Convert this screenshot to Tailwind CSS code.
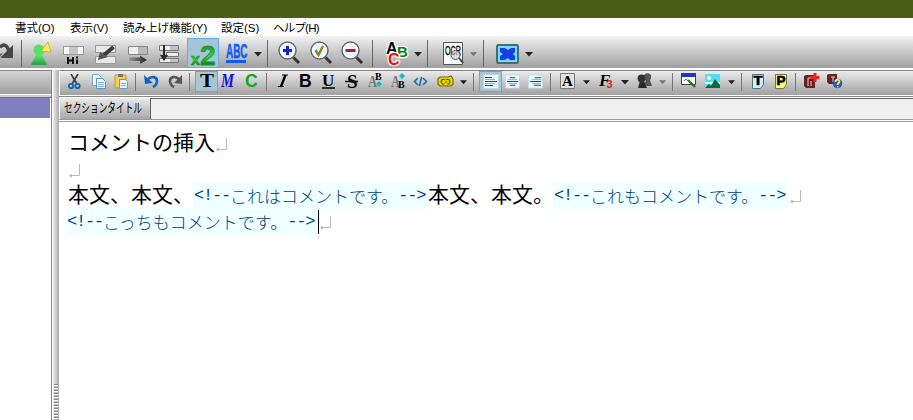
<!DOCTYPE html>
<html lang="ja">
<head>
<meta charset="utf-8">
<title>エディタ</title>
<script src="https://cdn.jsdelivr.net/npm/@tailwindcss/browser@4"></script>
</head>
<body class="w-[913px] h-[420px] overflow-hidden bg-white text-black font-['Liberation_Sans','Noto_Sans_CJK_JP',sans-serif]">
<svg class="absolute w-0 h-0">
  <defs>
    <linearGradient id="gr" x1="0" y1="0" x2="0" y2="1"><stop offset="0" stop-color="#5df06a"/><stop offset="1" stop-color="#2c9a4a"/></linearGradient>
    <linearGradient id="x2g" x1="0" y1="0" x2="0" y2="1"><stop offset="0.15" stop-color="#18882a"/><stop offset=".5" stop-color="#30d838"/><stop offset=".85" stop-color="#0c7018"/></linearGradient>
    <linearGradient id="dk" x1="0" y1="0" x2="1" y2="0"><stop offset="0" stop-color="#999"/><stop offset="1" stop-color="#222"/></linearGradient>
    <linearGradient id="kd" x1="0" y1="0" x2="1" y2="0"><stop offset="0" stop-color="#555"/><stop offset="1" stop-color="#222"/></linearGradient>
    <symbol id="dd" viewBox="0 0 8 5"><path d="M0 0h8L4 4.5z" fill="currentColor"/></symbol>
    <symbol id="lens" viewBox="0 0 23 24"><path d="M15.500 16.500l5.500 5.500" stroke="#333" stroke-width="3"/><circle cx="9.500" cy="9.500" r="8.500" fill="#e4f8ff" stroke="#667" stroke-width="1.500"/><circle cx="9.500" cy="9.500" r="6.800" fill="none" stroke="#fff" stroke-width="1.500"/></symbol>
  </defs>
</svg>
<div class="flex flex-col h-full">
  <div class="h-[18px] shrink-0 bg-[#4a5e17]"></div>
  <nav class="h-[18px] shrink-0 bg-white flex items-center pl-[15px] pt-px text-[11.500px] leading-[18px] whitespace-nowrap">
    <span class="w-[55px]">書式(O)</span>
    <span class="w-[53px]">表示(V)</span>
    <span class="w-[98px]">読み上げ機能(Y)</span>
    <span class="w-[52px]">設定(S)</span>
    <span class="tracking-[-0.800px]">ヘルプ(H)</span>
  </nav>

  <div class="h-[34px] shrink-0 bg-linear-to-b from-[#f2f2f2] to-[#a0a0a0] border-b-2 border-b-white flex items-start pt-[2px] overflow-hidden">
    <svg class="shrink-0 w-[14px] h-[30px]" viewBox="0 0 14 30"><path d="M0 9.500C4 4.500 8 8 9 14" stroke="#444" stroke-width="3.500" fill="none"/><path d="M1 19L13 7v13H1z" fill="#484848"/><path d="M0 19v-3l3-1z" fill="#666"/></svg>
    <i class="shrink-0 ml-[7px] mt-[2px] w-px h-[27px] bg-[#666]"></i>
    <svg class="shrink-0 ml-[9px] w-[22px] h-[30px]" viewBox="0 0 22 30"><path d="M0 27c1-4 4-6 5-11h6c1 5 4 7 5 11z" fill="url(#gr)"/><circle cx="8" cy="12" r="5.500" fill="#57e262"/><path d="M10 13l7-9 3 10z" fill="#ffe94d" stroke="#c8a820" stroke-width=".7"/></svg>
    <svg class="shrink-0 ml-[10px] w-[21px] h-[30px]" viewBox="0 0 21 30"><rect x=".5" y="8.500" width="20" height="8" fill="#f6f6f6" stroke="#999"/><path d="M6 9h9v7H6z" fill="#c8c8c8"/><path d="M5 19v7M10 19v7M5 22.500h5M14 21.500V26M14 18.500v2" stroke="#111" stroke-width="2"/></svg>
    <svg class="shrink-0 ml-[11px] w-[21px] h-[30px]" viewBox="0 0 21 30"><path d="M.5 7.500h20v7h-20zM.5 18.500h20v7h-20z" fill="#e8e8e8" stroke="#999"/><path d="M18.500 9L9 17" stroke="#3c3c3c" stroke-width="4"/><path d="M3 22l2-8 8 5z" fill="#555"/></svg>
    <svg class="shrink-0 ml-[12px] w-[21px] h-[30px]" viewBox="0 0 21 30"><path d="M.5 8.500h19v8H.5z" fill="#eee" stroke="#888"/><path d="M10 9h9v7h-9z" fill="#bbb"/><path d="M1 19.500h11v-2l7 4.500-7 4v-3H1z" fill="url(#dk)"/></svg>
    <svg class="shrink-0 ml-[10px] w-[21px] h-[30px]" viewBox="0 0 21 30"><path d="M.5 7.500h19v5H.5zM7.500 14.500h12v4h-12zM.5 20.500h19v4H.5z" fill="#eee" stroke="#777"/><path d="M11 8h8v4h-8zM11 21h8v3h-8z" fill="#c4c4c4"/><path d="M4 7h2v10h3l-4 6-4-6h3z" fill="#2a2a2a"/></svg>
    <div class="shrink-0 ml-[7px] w-[32px] h-[30px] bg-[#a5c4d8] border border-[#62aee0]">
      <svg class="w-[30px] h-[28px]" viewBox="0 0 30 28"><text x="3" y="26" font-size="16" font-weight="bold" font-family="Liberation Sans" fill="url(#x2g)" stroke="#1d9a2b" stroke-width=".7">x</text><text x="12" y="26" font-size="28" font-weight="bold" font-family="Liberation Sans" fill="url(#x2g)" stroke="#1d9a2b" stroke-width=".8">2</text></svg>
    </div>
    <svg class="shrink-0 ml-[6px] w-[24px] h-[30px]" viewBox="0 0 24 30"><text x="1" y="20" font-size="20" font-weight="bold" font-family="Liberation Sans" fill="#0a5cff" stroke="#0a5cff" stroke-width=".4" textLength="21.500" lengthAdjust="spacingAndGlyphs">ABC</text><path d="M1 22h20v3H1z" fill="#0a5cff"/></svg>
    <svg class="shrink-0 ml-[5px] mt-[14px] w-[8px] h-[5px] text-[#222]"><use href="#dd"/></svg>
    <i class="shrink-0 ml-[5px] mt-[2px] w-px h-[27px] bg-[#666]"></i>
    <svg class="shrink-0 ml-[10px] mt-[3px] w-[23px] h-[24px]" viewBox="0 0 23 24"><use href="#lens"/><path d="M9.500 5v9M5 9.500h9" stroke="#1020d8" stroke-width="3"/></svg>
    <svg class="shrink-0 ml-[9px] mt-[3px] w-[23px] h-[24px]" viewBox="0 0 23 24"><use href="#lens"/><path d="M5.500 9l3 5L13 5" stroke="#948320" stroke-width="2.500" fill="none"/></svg>
    <svg class="shrink-0 ml-[8px] mt-[3px] w-[23px] h-[24px]" viewBox="0 0 23 24"><use href="#lens"/><path d="M4.500 9.500h10" stroke="#cc1020" stroke-width="3"/></svg>
    <i class="shrink-0 ml-[8px] mt-[2px] w-px h-[27px] bg-[#666]"></i>
    <svg class="shrink-0 ml-[13px] w-[24px] h-[30px]" viewBox="0 0 24 30" font-family="Liberation Sans" font-weight="bold" stroke-linejoin="round"><g stroke="#fff" stroke-width="2.500" paint-order="stroke"><text x="0" y="16" font-size="16" fill="#000">A</text><text x="11" y="19" font-size="15" fill="#0a7d17">B</text><text x="2" y="27" font-size="16" fill="#f01010">C</text></g></svg>
    <svg class="shrink-0 ml-[4px] mt-[14px] w-[8px] h-[5px] text-[#222]"><use href="#dd"/></svg>
    <i class="shrink-0 ml-[5px] mt-[2px] w-px h-[27px] bg-[#666]"></i>
    <svg class="shrink-0 ml-[15px] w-[22px] h-[30px]" viewBox="0 0 22 30"><path d="M.5 4.500h19v22H.5z" fill="#fafafa" stroke="#555"/><text x="2" y="17" font-size="12" font-family="Liberation Sans" fill="#000" stroke="#000" stroke-width=".3" textLength="16" lengthAdjust="spacingAndGlyphs">OCR</text><circle cx="12.500" cy="17" r="4.500" fill="#ccc" fill-opacity=".65" stroke="#555"/><path d="M16 20l4 5" stroke="#444" stroke-width="2"/></svg>
    <svg class="shrink-0 ml-[5px] mt-[14px] w-[7px] h-[5px] text-[#777]"><use href="#dd"/></svg>
    <i class="shrink-0 ml-[6px] mt-[2px] w-px h-[27px] bg-[#666]"></i>
    <svg class="shrink-0 ml-[12px] w-[24px] h-[30px]" viewBox="0 0 24 30"><rect x="1" y="7" width="21" height="18" rx="1.500" fill="#68e4f5" stroke="#526570" stroke-width="2"/><path d="M4 10h5l3 2 3-2h4v4l-2 2 2 2v4h-5l-2-2-3 2H4v-4l3-2-3-2z" fill="#183ce8"/></svg>
    <svg class="shrink-0 ml-[5px] mt-[14px] w-[8px] h-[5px] text-[#222]"><use href="#dd"/></svg>
  </div>

  <div class="flex flex-1 min-h-0">
    <aside class="w-[52px] shrink-0 flex flex-col border-r border-r-[#888]">
      <div class="h-[24px] bg-linear-to-b from-[#d4d4d4] to-[#a0a0a0] border-t border-t-[#888]"></div>
      <div class="h-[4px] border-b border-b-[#777] border-t border-t-white bg-[#ccc]"></div>
      <div class="h-[20px] w-[50px] bg-[#8080c0]"></div>
      <div class="flex-1 bg-white"></div>
    </aside>
    <div class="w-[7px] shrink-0 border-l border-l-white bg-linear-to-r from-[#eee] to-[#aaa] flex flex-col justify-end">
      <div class="h-[36px] ml-px w-[4px] bg-[repeating-linear-gradient(to_bottom,#888_0_1px,#fff_1px_2px,#bbb_2px_3px)]"></div>
    </div>
    <main class="flex-1 min-w-0 flex flex-col">
      <div class="h-[25px] shrink-0 bg-linear-to-b from-[#ececec] to-[#a0a0a0] border-t border-t-[#888] border-l border-l-white flex items-start">
        <svg class="shrink-0 ml-[8px] mt-[3px] w-[14px] h-[16px]" viewBox="0 0 14 16"><path d="M3 0l6 10M10 0L4 10" stroke="#345" stroke-width="1.700"/><circle cx="3" cy="12" r="2.200" fill="none" stroke="#1264b4" stroke-width="1.800"/><circle cx="9.500" cy="12" r="2.200" fill="none" stroke="#1264b4" stroke-width="1.800"/></svg>
        <svg class="shrink-0 ml-[9px] mt-[2px] w-[16px] h-[17px]" viewBox="0 0 16 17"><path d="M1.500 1.500h6l3 3v8h-9z" fill="#eef6ff" stroke="#78a4d4"/><path d="M5.500 5.500h6l3 3v7h-9z" fill="#eef6ff" stroke="#5890c8"/><path d="M7 9.500h6M7 11.500h6M7 13.500h6" stroke="#88b0dc"/></svg>
        <svg class="shrink-0 ml-[7px] mt-[2px] w-[15px] h-[17px]" viewBox="0 0 15 17"><path d="M1 2h11v13H1z" fill="#f4ce50" stroke="#c09830"/><path d="M4 1h5v3H4z" fill="#777"/><path d="M5.500 6.500h6l2 2v7h-8z" fill="#eff6ff" stroke="#6898c8"/><path d="M7 10.500h5M7 12.500h5" stroke="#88b0dc"/></svg>
        <i class="shrink-0 ml-[6px] mt-[2px] w-px h-[18px] bg-[#777]"></i>
        <svg class="shrink-0 ml-[8px] mt-[3px] w-[15px] h-[15px]" viewBox="0 0 15 15"><path d="M3 6c5-5 10-3 10 1 0 3-2 5-4 6" fill="none" stroke="#1564bc" stroke-width="2.600"/><path d="M0 1l1 9 8-1z" fill="#1564bc"/></svg>
        <svg class="shrink-0 ml-[9px] mt-[3px] w-[15px] h-[15px]" viewBox="0 0 15 15"><path d="M12 6C7 1 2 3 2 7c0 3 2 5 4 6" fill="none" stroke="#555" stroke-width="2.600"/><path d="M14 1v9L6 9z" fill="#555"/></svg>
        <i class="shrink-0 ml-[6px] mt-[2px] w-px h-[18px] bg-[#777]"></i>
        <div class="shrink-0 ml-[5px] w-[23px] h-[21px] bg-[#a9c6d8] border border-[#62a8d8]"><svg class="w-[21px] h-[19px]"><text x="4" y="15" font-size="19" font-weight="bold" font-family="Liberation Serif" textLength="14" lengthAdjust="spacingAndGlyphs">T</text></svg></div>
        <svg class="shrink-0 ml-[3px] w-[15px] h-[20px]"><text x="0" y="16" font-size="18" font-weight="bold" font-style="italic" font-family="Liberation Serif" fill="#1010e0" textLength="13" lengthAdjust="spacingAndGlyphs">M</text></svg>
        <svg class="shrink-0 ml-[9px] w-[14px] h-[20px]"><text x="0" y="16" font-size="17.500" font-weight="bold" font-family="Liberation Sans" fill="#0cac14">C</text></svg>
        <i class="shrink-0 ml-[7px] mt-[2px] w-px h-[18px] bg-[#777]"></i>
        <svg class="shrink-0 ml-[10px] w-[13px] h-[20px]"><path d="M5 4h6M1 15.500h6M8.500 4L4 15.500" stroke="#000" stroke-width="1"/><path d="M8.500 4L4 15.500" stroke="#000" stroke-width="2.400"/></svg>
        <svg class="shrink-0 ml-[9px] w-[14px] h-[20px]"><text x="0" y="16" font-size="17.500" font-weight="bold" font-family="Liberation Sans">B</text></svg>
        <svg class="shrink-0 ml-[8px] w-[16px] h-[20px]"><text x="1" y="15" font-size="17" font-weight="bold" font-family="Liberation Serif">U</text><path d="M1 17h13" stroke="#000" stroke-width="1.500"/></svg>
        <svg class="shrink-0 ml-[8px] w-[15px] h-[20px]"><text x="2" y="17" font-size="19" font-weight="bold" font-family="Liberation Serif">S</text><path d="M0 10.500h13" stroke="#000" stroke-width="1.500"/></svg>
        <svg class="shrink-0 ml-[8px] w-[16px] h-[20px]" font-family="Liberation Serif" font-weight="bold"><text x="0" y="16" font-size="17" fill="#777" textLength="9" lengthAdjust="spacingAndGlyphs">A</text><text x="7" y="9" font-size="10">B</text><path d="M8 13l3-3 3 3-3 3z" fill="#13bbc2"/></svg>
        <svg class="shrink-0 ml-[7px] w-[16px] h-[20px]" font-family="Liberation Serif" font-weight="bold"><text x="0" y="16" font-size="17" fill="#777" textLength="9" lengthAdjust="spacingAndGlyphs">A</text><text x="7" y="17" font-size="10">B</text><path d="M8 5l3-3 3 3-3 3z" fill="#13bbc2"/></svg>
        <svg class="shrink-0 ml-[6px] mt-[5px] w-[15px] h-[12px]" viewBox="0 0 15 12"><path d="M5 2L1.500 5.500 5 9M10 2l3.500 3.500L10 9M8.500 1l-2 9" fill="none" stroke="#1c6eb4" stroke-width="1.600"/></svg>
        <svg class="shrink-0 ml-[9px] mt-[3px] w-[17px] h-[15px]" viewBox="0 0 17 15"><path d="M3 3h8l3-1 2 3v5l-2 2H3L1 10V5z" fill="#ead900" stroke="#756c00" stroke-width="1.200"/><path d="M8 5.500H5L4 8l1.500 2h2M9 5.500h3L13 8l-1 2h-2M8 8h2" stroke="#554e00" fill="none" stroke-width="1.200"/></svg>
        <svg class="shrink-0 ml-[6px] mt-[9px] w-[7px] h-[5px] text-[#222]"><use href="#dd"/></svg>
        <i class="shrink-0 ml-[6px] mt-[2px] w-px h-[18px] bg-[#777]"></i>
        <div class="shrink-0 ml-[5px] w-[23px] h-[21px] bg-[#a9c6d8] border border-[#62a8d8] flex justify-center pt-[2px]"><svg class="w-[16px] h-[15px]" viewBox="0 0 16 15"><path fill="#ecfaff" stroke="#b6dcea" d="M.5.5h15v14H.5z"/><path d="M2 3.500h7M2 7.500h12M2 11.500h8" stroke="#174c84" stroke-width="1.200"/><path d="M2 5.500h10M2 9.500h10" stroke="#74bad8"/></svg></div>
        <svg class="shrink-0 ml-[3px] mt-[3px] w-[15px] h-[15px]" viewBox="0 0 16 15"><path fill="#ecfaff" stroke="#b6dcea" d="M.5.5h15v14H.5z"/><path d="M5 3.500h6M2 7.500h12M5 11.500h6" stroke="#174c84" stroke-width="1.200"/><path d="M3 5.500h10M3 9.500h10" stroke="#74bad8"/></svg>
        <svg class="shrink-0 ml-[8px] mt-[3px] w-[15px] h-[15px]" viewBox="0 0 16 15"><path fill="#ecfaff" stroke="#b6dcea" d="M.5.5h15v14H.5z"/><path d="M7 3.500h7M2 7.500h12M6 11.500h8" stroke="#174c84" stroke-width="1.200"/><path d="M4 5.500h10M4 9.500h10" stroke="#74bad8"/></svg>
        <i class="shrink-0 ml-[7px] mt-[2px] w-px h-[18px] bg-[#777]"></i>
        <svg class="shrink-0 ml-[9px] mt-[2px] w-[15px] h-[16px]"><path d="M.5.5h14v15H.5z" fill="#e2e2e2" stroke="#777"/><text x="2" y="13" font-size="15" font-weight="bold" font-family="Liberation Serif">A</text></svg>
        <svg class="shrink-0 ml-[8px] mt-[9px] w-[7px] h-[5px] text-[#222]"><use href="#dd"/></svg>
        <svg class="shrink-0 ml-[9px] w-[16px] h-[20px]"><text x="0" y="15" font-size="17" font-weight="bold" font-style="italic" font-family="Liberation Serif">F</text><text x="7.500" y="17" font-size="11" font-weight="bold" font-family="Liberation Sans" fill="#e01818">3</text></svg>
        <svg class="shrink-0 ml-[6px] mt-[9px] w-[8px] h-[5px] text-[#222]"><use href="#dd"/></svg>
        <svg class="shrink-0 ml-[8px] mt-[2px] w-[16px] h-[16px]" viewBox="0 0 16 16"><path d="M7 13l2-6h4l2 6z" fill="#555"/><circle cx="10.500" cy="4" r="3.700" fill="#555"/><path d="M1 15l2-7h4l3 7z" fill="#292929"/><circle cx="4.500" cy="5.500" r="3.900" fill="#333"/></svg>
        <svg class="shrink-0 ml-[6px] mt-[9px] w-[7px] h-[5px] text-[#777]"><use href="#dd"/></svg>
        <i class="shrink-0 ml-[6px] mt-[2px] w-px h-[18px] bg-[#777]"></i>
        <svg class="shrink-0 ml-[8px] mt-[2px] w-[16px] h-[16px]" viewBox="0 0 16 16"><path d="M.5 1.500h14v10H.5z" fill="#fff" stroke="#444"/><path d="M0 0h15v4H0z" fill="#2434c8"/><path d="M3 8l2-2 2 2" stroke="#777" fill="none"/><path d="M7 7l7 7" stroke="#2b7a2b" stroke-width="2.400"/></svg>
        <svg class="shrink-0 ml-[8px] mt-[3px] w-[16px] h-[15px]" viewBox="0 0 16 15"><path d="M0 0h15v14H0z" fill="#56dcf5"/><path d="M0 8h15v2H0z" fill="#c6f4ff"/><path d="M0 14l4-4 2 2 4-7 5 6v3z" fill="#0c6a38"/><circle cx="4" cy="4" r="2" fill="#f4fff4"/></svg>
        <svg class="shrink-0 ml-[7px] mt-[9px] w-[7px] h-[5px] text-[#222]"><use href="#dd"/></svg>
        <i class="shrink-0 ml-[6px] mt-[2px] w-px h-[18px] bg-[#777]"></i>
        <svg class="shrink-0 ml-[10px] mt-[3px] w-[13px] h-[15px]"><path d="M.5.500h11v10l-3 4h-8z" fill="#c4f5f9" stroke="#587078"/><text x="1.500" y="11" font-size="12.500" font-weight="bold" font-family="Liberation Sans" stroke="#000" stroke-width=".6" textLength="9" lengthAdjust="spacingAndGlyphs">T</text></svg>
        <svg class="shrink-0 ml-[10px] mt-[3px] w-[13px] h-[15px]"><path d="M.5.500h11v10l-3 4h-8z" fill="#fbf878" stroke="#77743c"/><text x="1.500" y="11" font-size="12.500" font-weight="bold" font-family="Liberation Sans" stroke="#000" stroke-width=".6" textLength="9" lengthAdjust="spacingAndGlyphs">P</text></svg>
        <i class="shrink-0 ml-[7px] mt-[2px] w-px h-[18px] bg-[#777]"></i>
        <svg class="shrink-0 ml-[8px] mt-[2px] w-[16px] h-[16px]" viewBox="0 0 16 16"><path d="M0 3l2-1h9v13H2L0 13z" fill="#6c1f24"/><path d="M4 5v8M4 5h4M7 8v5" stroke="#ddb" stroke-width="1"/><path d="M11 0v9M6.500 4.500h9" stroke="#ee2024" stroke-width="3"/></svg>
        <svg class="shrink-0 ml-[7px] mt-[2px] w-[16px] h-[16px]" viewBox="0 0 16 16"><path d="M0 2l2-1h8v10H2L0 9z" fill="#6c1f24"/><path d="M4 4h4M6 4v5" stroke="#ddb"/><circle cx="10.500" cy="10.500" r="4.800" fill="#2d56c4"/><path d="M8.500 9c0-3 4-3 4-.5 0 1.500-2 1.500-2 3.500" stroke="#fff04a" stroke-width="1.800" fill="none"/><path d="M10 13h1.500v1.500H10z" fill="#fff04a"/></svg>
      </div>
      <div class="h-[3px] shrink-0 bg-[#888] border-y border-y-white"></div>
      <div class="h-[21px] shrink-0 flex ">
        <div class="w-[91px] shrink-0 border-l border-l-white bg-linear-to-b from-[#ececec] to-[#a8a8a8] pl-[4px] whitespace-nowrap"><svg class="w-[80px] h-[20px]"><text x="0" y="13.500" font-size="13" font-family="Noto Sans CJK JP" textLength="78" lengthAdjust="spacingAndGlyphs">セクションタイトル</text></svg></div>
        <div class="flex-1 bg-[#efefef] border-l border-t border-[#666]"></div>
      </div>
      <div class="h-[3px] shrink-0 bg-white border-y border-y-[#999]"></div>
      <article class="flex-1 pl-[9px] pt-[8px] text-[21px] leading-[22px] whitespace-nowrap font-['Noto_Sans_CJK_JP',sans-serif]">
        <p class="h-[26px] flex">コメントの挿入<svg class="mt-[8px] ml-px w-[12px] h-[14px]" viewBox="0 0 12 14"><path d="M10.500 0v11.500H1" fill="none" stroke="#bbb"/><circle cx="2" cy="11.500" r="1.500" fill="#bbb"/></svg></p>
        <p class="h-[26px] flex"><svg class="mt-[8px] ml-px w-[12px] h-[14px]" viewBox="0 0 12 14"><path d="M10.500 0v11.500H1" fill="none" stroke="#bbb"/><circle cx="2" cy="11.500" r="1.500" fill="#bbb"/></svg></p>
        <p class="h-[26px] flex"><span>本文、本文、</span><span class="h-[27px] w-[234px] -ml-px pl-px bg-[#f0ffff] text-[#003c80] text-[17px] leading-[27px] font-light flex"><span class="font-['Liberation_Mono'] tracking-[-1.200px]">&lt;!--</span>これはコメントです。<span class="font-['Liberation_Mono'] tracking-[-1.200px]">--&gt;</span></span><span class="ml-px">本文、本文。</span><span class="h-[27px] w-[235px] -ml-px pl-px bg-[#f0ffff] text-[#003c80] text-[17px] leading-[27px] font-light flex"><span class="font-['Liberation_Mono'] tracking-[-1.200px]">&lt;!--</span>これもコメントです。<span class="font-['Liberation_Mono'] tracking-[-1.200px]">--&gt;</span></span><svg class="mt-[8px] ml-[2px] w-[12px] h-[14px]" viewBox="0 0 12 14"><path d="M10.500 0v11.500H1" fill="none" stroke="#bbb"/><circle cx="2" cy="11.500" r="1.500" fill="#bbb"/></svg></p>
        <p class="h-[27px] flex -ml-[2px]"><span class="h-[27px] w-[252px] pl-px bg-[#f0ffff] text-[#003c80] text-[17px] leading-[27px] font-light flex"><span class="font-['Liberation_Mono'] tracking-[-1.200px]">&lt;!--</span>こっちもコメントです。<span class="font-['Liberation_Mono'] tracking-[-1.200px]">--&gt;</span></span><i class="w-px h-[24px] mt-[2px] bg-black"></i><svg class="mt-[8px] ml-px w-[12px] h-[14px]" viewBox="0 0 12 14"><path d="M10.500 0v11.500H1" fill="none" stroke="#bbb"/><circle cx="2" cy="11.500" r="1.500" fill="#bbb"/></svg></p>
      </article>
    </main>
  </div>
</div>
</body>
</html>
